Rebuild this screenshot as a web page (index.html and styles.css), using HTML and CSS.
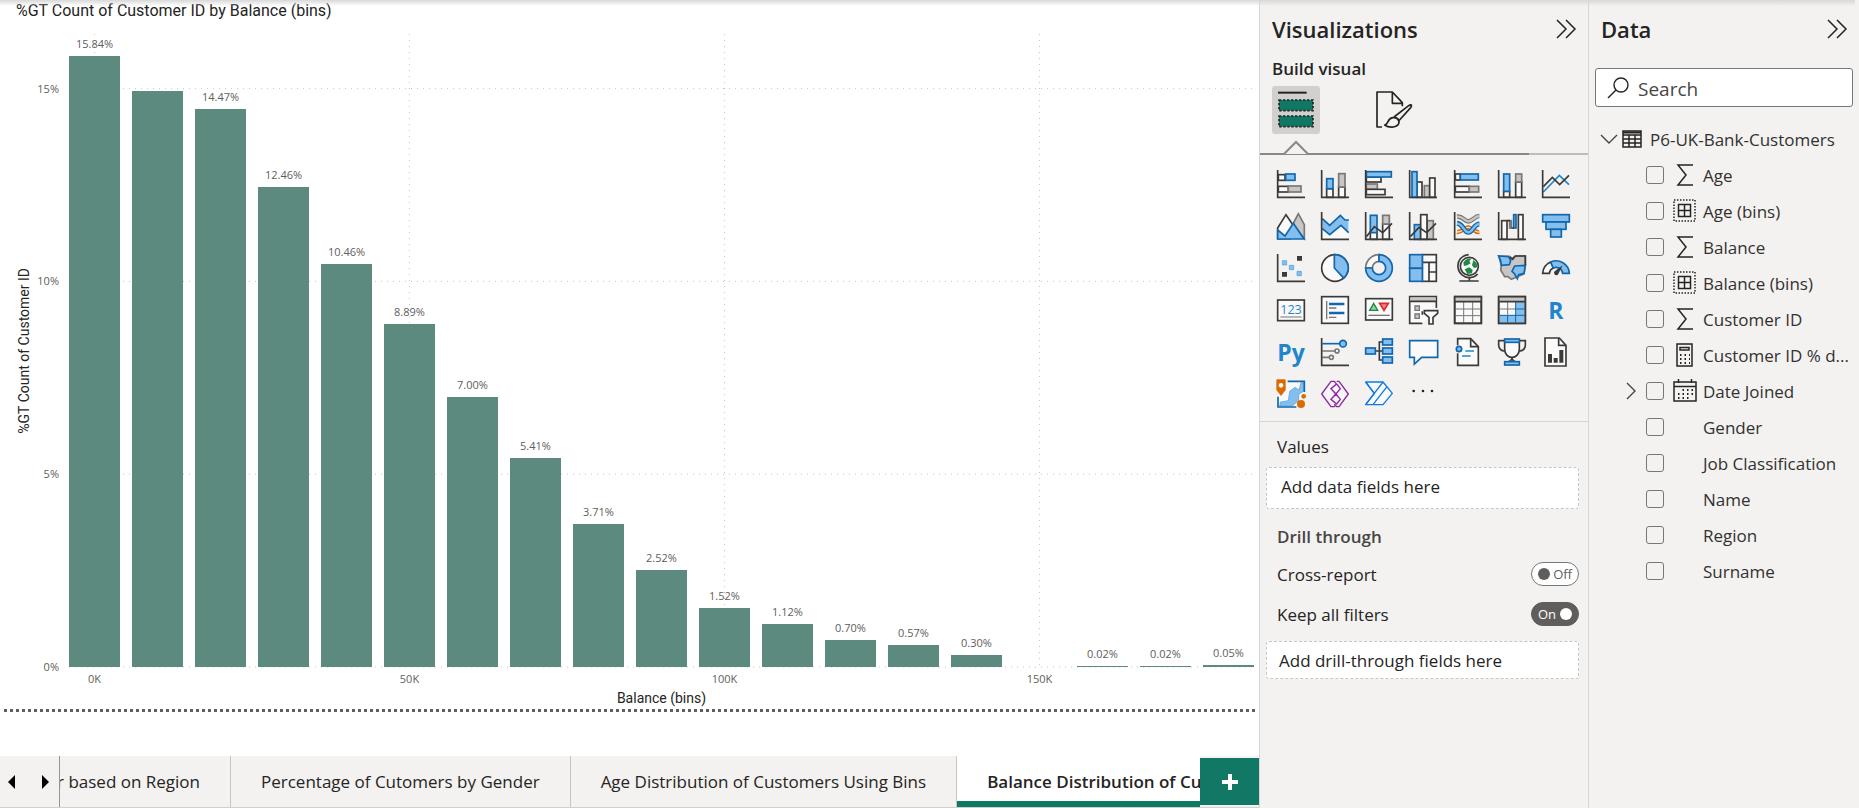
FILE: index.html
```html
<!DOCTYPE html>
<html lang="en">
<head>
<meta charset="utf-8">
<title>Balance Distribution of Customers</title>
<link rel="stylesheet" href="styles.css">
</head>
<body>
<div class="app">
  <main class="report">
    <h1 class="chart-title">%GT Count of Customer ID by Balance (bins)</h1>
    <section class="chart">
      <div class="y-title"><span>%GT Count of Customer ID</span></div>
      <div class="y-axis">
        <span style="--v:15">15%</span>
        <span style="--v:10">10%</span>
        <span style="--v:5">5%</span>
        <span style="--v:0">0%</span>
      </div>
      <div class="plot">
        <svg class="gridlines" aria-hidden="true">
          <line x1="0" x2="100%" y1="8.63%" y2="8.63%"/>
          <line x1="0" x2="100%" y1="39.08%" y2="39.08%"/>
          <line x1="0" x2="100%" y1="69.54%" y2="69.54%"/>
          <line x1="0" x2="100%" y1="100%" y2="100%"/>
          <line x1="2.15%" x2="2.15%" y1="0" y2="100%"/>
          <line x1="28.73%" x2="28.73%" y1="0" y2="100%"/>
          <line x1="55.32%" x2="55.32%" y1="0" y2="100%"/>
          <line x1="81.9%" x2="81.9%" y1="0" y2="100%"/>
        </svg>
        <ul class="bars">
          <li><span>15.84%</span><i style="--v:15.84"></i></li>
          <li><i style="--v:14.93"></i></li>
          <li><span>14.47%</span><i style="--v:14.47"></i></li>
          <li><span>12.46%</span><i style="--v:12.46"></i></li>
          <li><span>10.46%</span><i style="--v:10.46"></i></li>
          <li><span>8.89%</span><i style="--v:8.89"></i></li>
          <li><span>7.00%</span><i style="--v:7"></i></li>
          <li><span>5.41%</span><i style="--v:5.41"></i></li>
          <li><span>3.71%</span><i style="--v:3.71"></i></li>
          <li><span>2.52%</span><i style="--v:2.52"></i></li>
          <li><span>1.52%</span><i style="--v:1.52"></i></li>
          <li><span>1.12%</span><i style="--v:1.12"></i></li>
          <li><span>0.70%</span><i style="--v:0.7"></i></li>
          <li><span>0.57%</span><i style="--v:0.57"></i></li>
          <li><span>0.30%</span><i style="--v:0.3"></i></li>
          <li></li>
          <li><span>0.02%</span><i style="--v:0.02"></i></li>
          <li><span>0.02%</span><i style="--v:0.02"></i></li>
          <li><span>0.05%</span><i style="--v:0.05"></i></li>
        </ul>
      </div>
      <div class="x-axis">
        <span>0K</span><span>50K</span><span>100K</span><span>150K</span>
      </div>
      <div class="x-title">Balance (bins)</div>
    </section>
    <div class="page-edge"></div>
    <nav class="tabbar" aria-label="Report pages">
      <div class="pager">
        <button type="button" aria-label="Previous pages"><svg width="8" height="14" viewBox="0 0 8 14"><path d="M7 0V14L0 7Z"/></svg></button>
        <button type="button" aria-label="Next pages"><svg width="8" height="14" viewBox="0 0 8 14"><path d="M1 0V14L8 7Z"/></svg></button>
      </div>
      <div class="tabs">
        <button type="button" class="tab tab-cut"><span>r based on Region</span></button>
        <button type="button" class="tab">Percentage of Cutomers by Gender</button>
        <button type="button" class="tab">Age Distribution of Customers Using Bins</button>
        <button type="button" class="tab active" aria-current="page">Balance Distribution of Customers</button>
      </div>
      <button type="button" class="add-page" aria-label="New page"><svg width="18" height="18" viewBox="0 0 18 18"><path d="M9 1V17M1 9H17"/></svg></button>
    </nav>
  </main>

  <aside class="panel visualizations">
    <header class="panel-head">
      <h2>Visualizations</h2>
      <button type="button" aria-label="Collapse"><svg class="chev" width="20" height="20" viewBox="0 0 20 20"><path d="M1 1L10 10L1 19M10 1L19 10L10 19"/></svg></button>
    </header>
    <h3>Build visual</h3>
    <div class="modes">
      <button type="button" class="mode selected" aria-label="Build visual">
        <svg width="36" height="36" viewBox="0 0 108 108"><path d="M0 2H86" stroke="#252423" stroke-width="6"/><g fill="#117865" stroke="#252423" stroke-width="5" stroke-dasharray="7 5"><rect x="3" y="24" width="102" height="32"/><rect x="3" y="72" width="102" height="32"/></g></svg>
      </button>
      <button type="button" class="mode" aria-label="Format visual">
        <svg width="36" height="38" viewBox="0 0 108 114" fill="none" stroke="#252423" stroke-width="5" stroke-linejoin="round"><path d="M18 108H3V3H49L79 35V46M49 3V37H79"/><path d="M26 102C38 100 32 84 50 80C62 78 72 88 68 98C62 112 36 110 26 102Z"/><path d="M54 78L98 44C108 38 108 44 104 50L68 90M54 78C62 80 68 84 70 90"/></svg>
      </button>
    </div>
    <div class="pointer"><svg width="30" height="14" viewBox="0 0 30 14"><path d="M0 13H3L15 1L27 13H30"/></svg></div>

    <div class="gallery">
      <button type="button" aria-label="Stacked bar chart"><svg viewBox="0 0 84 84"><rect class="w" x="4" y="14" width="20" height="17"/><rect class="b" x="26" y="12" width="28" height="19"/><rect class="w" x="4" y="49" width="30" height="17"/><rect class="g" x="34" y="48" width="38" height="18"/><path class="k" d="M2 0V82H84"/></svg></button>
      <button type="button" aria-label="Stacked column chart"><svg viewBox="0 0 84 84"><rect class="w" x="17" y="56" width="19" height="26"/><rect class="b" x="17" y="26" width="19" height="30"/><rect class="w" x="53" y="51" width="19" height="31"/><rect class="g" x="53" y="11" width="19" height="40"/><path class="k" d="M2 0V82H84"/></svg></button>
      <button type="button" aria-label="Clustered bar chart"><svg viewBox="0 0 84 84"><rect class="w" x="4" y="21" width="44" height="15"/><rect class="b" x="4" y="5" width="75" height="16"/><rect class="g" x="4" y="42" width="33" height="16"/><rect class="w" x="4" y="58" width="56" height="16"/><path class="k" d="M2 0V82H84"/></svg></button>
      <button type="button" aria-label="Clustered column chart"><svg viewBox="0 0 84 84"><rect class="w" x="24" y="36" width="15" height="46"/><rect class="b" x="9" y="5" width="15" height="77"/><rect class="g" x="46" y="47" width="16" height="35"/><rect class="w" x="62" y="24" width="16" height="58"/><path class="k" d="M2 0V82H84"/></svg></button>
      <button type="button" aria-label="100% stacked bar chart"><svg viewBox="0 0 84 84"><rect class="w" x="4" y="12" width="15" height="18"/><rect class="b" x="19" y="12" width="54" height="18"/><rect class="w" x="4" y="49" width="42" height="17"/><rect class="g" x="46" y="49" width="28" height="17"/><path class="k" d="M2 0V82H84"/></svg></button>
      <button type="button" aria-label="100% stacked column chart"><svg viewBox="0 0 84 84"><rect class="w" x="17" y="64" width="18" height="18"/><rect class="b" x="17" y="12" width="18" height="52"/><rect class="w" x="53" y="36" width="18" height="46"/><rect class="g" x="53" y="12" width="18" height="24"/><path class="k" d="M2 0V82H84"/></svg></button>
      <button type="button" aria-label="Line chart"><svg viewBox="0 0 84 84"><path class="k line-blue" d="M4 66L52 16L81 44"/><path class="k" d="M4 50L31 22L53 44L81 16"/><path class="k" d="M2 0V82H84"/></svg></button>

      <button type="button" aria-label="Area chart"><svg viewBox="0 0 84 84"><path class="w" d="M2 48L27 8L54 48L40 80H2Z"/><path class="g" d="M48 36L64 5L82 38V80Z"/><path class="b" d="M2 54L24 72L49 34L81 81H2Z"/></svg></button>
      <button type="button" aria-label="Stacked area chart"><svg viewBox="0 0 84 84"><path fill="#fafafa" d="M4 48L82 40V80H4Z"/><path class="b nostroke" d="M4 20L26 40L58 10L72 24H82V62L60 42L26 68L4 50Z"/><path class="bl" d="M4 20L26 40L58 10L72 24H84M4 50L26 68L60 40L83 62"/><path class="k" d="M2 0V82H84"/></svg></button>
      <button type="button" aria-label="Line and stacked column chart"><svg viewBox="0 0 84 84"><rect class="w" x="16" y="60" width="20" height="22"/><rect class="b" x="16" y="10" width="20" height="52"/><rect class="w" x="53" y="36" width="20" height="46"/><rect class="g" x="53" y="10" width="20" height="26"/><path class="k" d="M4 74L28 44L53 62L81 34"/><path class="k" d="M2 0V82H84"/></svg></button>
      <button type="button" aria-label="Line and clustered column chart"><svg viewBox="0 0 84 84"><rect class="b" x="16" y="38" width="19" height="44"/><rect class="g" x="54" y="26" width="19" height="56"/><rect class="w" x="35" y="8" width="19" height="74"/><path class="k" d="M4 74L30 46L53 62L81 34"/><path class="k" d="M2 0V82H84"/></svg></button>
      <button type="button" aria-label="Ribbon chart"><svg viewBox="0 0 84 84" fill="none"><path stroke="#797775" stroke-width="14" d="M9 14C28 12 30 28 43 28S62 12 76 12"/><path stroke="#c8c6c4" stroke-width="7" d="M9 14C28 12 30 28 43 28S62 12 76 12"/><path stroke="#d96b00" stroke-width="13" d="M9 60C26 62 30 44 43 46S62 62 76 60"/><path stroke="#fbe3cc" stroke-width="4" d="M9 60C26 62 30 44 43 46S62 62 76 60"/><path stroke="#1067ae" stroke-width="15" d="M9 34C28 36 30 61 43 61S60 36 76 36"/><path stroke="#83beec" stroke-width="7" d="M9 34C28 36 30 61 43 61S60 36 76 36"/><path class="k" d="M2 0V82H84"/></svg></button>
      <button type="button" aria-label="Waterfall chart"><svg viewBox="0 0 84 84"><rect class="w" x="11" y="26" width="16" height="56"/><rect class="g" x="35" y="26" width="5" height="22"/><rect class="b" x="47" y="8" width="7" height="40"/><rect class="w" x="61" y="8" width="14" height="74"/><path class="k" d="M27 26H36M40 48H48"/><path class="k" d="M2 0V82H84"/></svg></button>
      <button type="button" aria-label="Funnel"><svg viewBox="0 0 84 84"><rect class="b" x="2" y="8" width="80" height="22"/><rect class="b" x="12" y="30" width="60" height="22"/><rect class="b" x="26" y="52" width="32" height="23"/></svg></button>

      <button type="button" aria-label="Scatter chart"><svg viewBox="0 0 84 84"><path class="k" d="M2 0V82H84"/><path fill="#3b3a39" d="M60 6h15v14h-15zM15 54h15v14h-15z"/><path fill="#83beec" stroke="#4a9fdc" stroke-width="2" d="M16 20h13v13h-13zM37 34h13v13h-13zM60 52h13v13h-13z"/></svg></button>
      <button type="button" aria-label="Pie chart"><svg viewBox="0 0 84 84"><circle class="w" cx="42" cy="42" r="40"/><path class="b" d="M40 42V2A40 40 0 0 1 68 72Z"/></svg></button>
      <button type="button" aria-label="Donut chart"><svg viewBox="0 0 84 84"><path class="w line-gray" d="M2 42A40 40 0 0 1 42 2V22A20 20 0 0 0 22 42Z"/><path class="b" d="M42 2A40 40 0 1 1 2 42H22A20 20 0 1 0 42 22Z"/></svg></button>
      <button type="button" aria-label="Treemap"><svg viewBox="0 0 84 84"><rect class="w" x="40" y="2" width="42" height="80"/><path class="k" d="M40 25H82M60 25V82M60 54H82"/><rect class="b" x="2" y="2" width="38" height="41"/><rect class="b" x="2" y="43" width="38" height="39"/></svg></button>
      <button type="button" aria-label="Map"><svg viewBox="0 0 84 84"><circle class="w" cx="46" cy="37" r="27"/><path fill="#1f8a45" d="M28 26C34 14 46 12 52 14L46 22L50 28L40 34L30 36ZM58 18L68 28L70 40L60 42L54 34ZM32 46L46 40L56 48L54 58L40 60Z"/><path class="k" d="M44 2C22 4 10 20 12 40C14 58 30 72 48 71C58 70 66 66 71 60M46 72V80M16 81H74"/></svg></button>
      <button type="button" aria-label="Filled map"><svg viewBox="0 0 84 84"><path class="g" d="M2 6L36 8L42 14L52 6H82V34L78 60L58 68L40 76L30 68H20L8 48L10 34Z"/><path class="b" d="M2 6L32 8L38 20L34 32L10 34L8 20Z"/><path class="b" d="M50 36L82 34L78 58L62 62L58 74L50 60L42 52Z"/><path class="k" d="M36 10L44 16L52 6H82V34"/></svg></button>
      <button type="button" aria-label="Gauge"><svg viewBox="0 0 84 84"><path class="w" d="M2 58A40 40 0 0 1 26 24L34 42A20 20 0 0 0 22 58Z"/><path class="b" d="M26 24A40 40 0 0 1 82 58H62A20 20 0 0 0 34 42Z"/><path fill="#3b3a39" d="M62 34L50 58A7 7 0 1 1 38 52Z"/></svg></button>

      <button type="button" aria-label="Card"><svg viewBox="0 0 84 84"><rect class="w" x="2" y="12" width="80" height="62"/><text x="42" y="54" text-anchor="middle" font-size="38" fill="#1f86cb">123</text><path stroke="#797775" stroke-width="3" d="M10 63H74"/></svg></button>
      <button type="button" aria-label="Multi-row card"><svg viewBox="0 0 84 84"><rect class="w" x="2" y="2" width="80" height="80"/><path stroke="#797775" stroke-width="4" d="M17 15V70M24 36H46M24 64H46"/><path stroke="#1067ae" stroke-width="7" d="M24 24H70M24 51H70"/></svg></button>
      <button type="button" aria-label="KPI"><svg viewBox="0 0 84 84"><rect class="w" x="2" y="8" width="80" height="64"/><path fill="#8fd0a0" stroke="#1f8a45" stroke-width="4" d="M14 43L26 22L38 43Z"/><path fill="#f08080" stroke="#d92c2c" stroke-width="5" d="M44 22H70L57 43Z"/><path stroke="#797775" stroke-width="4" d="M10 58H74"/></svg></button>
      <button type="button" aria-label="Slicer"><svg viewBox="0 0 84 84"><path class="w" d="M40 82H2V2H82V36"/><path fill="#c8c6c4" d="M4 4H80V15H4Z"/><path class="k" d="M2 16H82M40 46V56"/><path fill="#c8c6c4" stroke="#797775" stroke-width="4" d="M18 30h13v13h-13zM18 54h13v13h-13z"/><path class="w" d="M46 44H86V52L72 64V84H60V64L46 52Z"/></svg></button>
      <button type="button" aria-label="Table"><svg viewBox="0 0 84 84"><rect class="w" x="2" y="2" width="80" height="80"/><path fill="#c8c6c4" d="M4 4H80V16H4Z"/><path stroke="#797775" stroke-width="3" d="M29 18V80M56 18V80M4 39H80M4 59H80"/><path class="k" d="M2 17H82M2 2H82V82H2Z"/></svg></button>
      <button type="button" aria-label="Matrix"><svg viewBox="0 0 84 84"><rect class="w" x="2" y="2" width="80" height="80"/><path fill="#c8c6c4" d="M4 4H80V16H4Z"/><path fill="#83beec" d="M53 18H80V80H4V57H53Z"/><path stroke="#797775" stroke-width="3" d="M29 18V56M4 39H53"/><path stroke="#1067ae" stroke-width="3" d="M29 58V80M53 18V80M53 39H80M4 58H80"/><path class="k" d="M2 17H82M2 2H82V82H2Z"/></svg></button>
      <button type="button" aria-label="R script visual" class="glyph">R</button>

      <button type="button" aria-label="Python visual" class="glyph">Py</button>
      <button type="button" aria-label="Key influencers"><svg viewBox="0 0 84 84"><path class="k line-gray" d="M4 39H42M4 58H24"/><circle class="w line-gray" cx="48" cy="39" r="6"/><circle class="w line-gray" cx="31" cy="58" r="6"/><path class="bl" d="M4 17H56"/><circle class="b" cx="66" cy="17" r="10"/><path class="k" d="M2 0V82H84"/></svg></button>
      <button type="button" aria-label="Decomposition tree"><svg viewBox="0 0 84 84"><path class="k" d="M30 39H52M54 12H43V66H54"/><rect class="b" x="2" y="30" width="29" height="18"/><rect class="b" x="53" y="3" width="29" height="18"/><rect class="b" x="53" y="30" width="29" height="18"/><rect class="b" x="53" y="57" width="29" height="18"/></svg></button>
      <button type="button" aria-label="Q&amp;A"><svg viewBox="0 0 84 84"><path class="w line-deep" d="M2 8H86V58H38L16 78V58H2Z"/></svg></button>
      <button type="button" aria-label="Smart narrative"><svg viewBox="0 0 84 84"><path class="w" d="M11 22V2H50L73 26V82H11V46"/><path class="k" d="M50 2V26H73"/><circle class="b" cx="15" cy="33" r="8"/><path class="bl line-blue" d="M34 39H60M24 54H50"/></svg></button>
      <button type="button" aria-label="Goals"><svg viewBox="0 0 84 84"><path class="k" d="M20 8H2V22C2 34 12 40 22 38M64 8H82V22C82 34 72 40 62 38"/><path class="w" d="M20 10V34C20 48 30 58 42 58S64 48 64 34V10M42 58C42 66 38 70 30 72H54C46 70 42 66 42 58"/><rect class="b" x="20" y="3" width="44" height="10"/><rect class="b" x="20" y="71" width="44" height="10"/></svg></button>
      <button type="button" aria-label="Paginated report"><svg viewBox="0 0 84 84"><path class="w" d="M9 0H52L72 22V84H9Z"/><path class="k" d="M50 0V22H72"/><path fill="#3b3a39" d="M18 48h12v26h-12zM35 60h12v14h-12zM52 36h12v38h-12z"/></svg></button>

      <button type="button" aria-label="ArcGIS Maps"><svg viewBox="0 0 84 84"><path fill="#fafafa" d="M30 4H80V40L60 66L54 78H4V40Z"/><path fill="#83beec" stroke="#4a9fdc" stroke-width="2" d="M80 8V34L66 42L64 62L46 78H8L10 66L34 62L38 34L54 22L66 30L72 8Z"/><path class="bl" d="M32 4H82V36M3 50V81H58"/><path fill="#d96b00" d="M-2 2Q-2 -2 2 -2H22Q26 -2 26 2V30L12 48L-2 30Z"/><circle cx="12" cy="16" r="7" fill="#fafafa"/><circle cx="72" cy="72" r="12" fill="#d96b00"/><circle cx="80" cy="49" r="7" fill="#d96b00"/></svg></button>
      <button type="button" aria-label="Power Apps"><svg viewBox="0 0 84 84" fill="#f8f4f9" stroke="#8a2b9c" stroke-width="4" stroke-linejoin="round"><path d="M30 4H40L47 12L30 26L45 42L30 58L47 72L40 80H30L2 42Z"/><path d="M47 4H54L82 42L54 80H47L40 72M47 12L58 26L45 42L58 58L47 72L30 58L45 42L30 26Z"/></svg></button>
      <button type="button" aria-label="Power Automate"><svg viewBox="0 0 84 84" fill="#fafafa" stroke="#0f7be0" stroke-width="4" stroke-linejoin="round"><path d="M2 6H54L82 40L54 74H2L28 40Z"/><path d="M54 6L2 74M66 20L24 74M28 40L2 6" fill="none"/></svg></button>
      <button type="button" aria-label="More visuals"><svg viewBox="0 0 84 84" fill="#252423"><circle cx="14" cy="33" r="4"/><circle cx="42" cy="33" r="4"/><circle cx="69" cy="33" r="4"/></svg></button>
    </div>

    <section class="wells">
      <h4>Values</h4>
      <div class="well well-values">Add data fields here</div>
      <h4 class="drill">Drill through</h4>
      <div class="switch-row"><span id="cross">Cross-report</span><button type="button" class="switch" role="switch" aria-checked="false" aria-labelledby="cross"><i></i>Off</button></div>
      <div class="switch-row"><span id="keep">Keep all filters</span><button type="button" class="switch on" role="switch" aria-checked="true" aria-labelledby="keep">On<i></i></button></div>
      <div class="well well-drill">Add drill-through fields here</div>
    </section>
  </aside>

  <aside class="panel data">
    <header class="panel-head">
      <h2>Data</h2>
      <button type="button" aria-label="Collapse"><svg class="chev" width="20" height="20" viewBox="0 0 20 20"><path d="M1 1L10 10L1 19M10 1L19 10L10 19"/></svg></button>
    </header>
    <label class="search">
      <svg width="22" height="22" viewBox="0 0 22 22" fill="none" stroke="#252423" stroke-width="1.4"><circle cx="14" cy="8" r="7"/><path d="M9 13L1 21"/></svg>
      <input type="search" placeholder="Search" aria-label="Search">
    </label>
    <div class="table-row">
      <svg class="caret" width="18" height="10" viewBox="0 0 18 10"><path d="M1 1L9 9L17 1"/></svg>
      <svg width="20" height="18" viewBox="0 0 20 18" fill="none" stroke="#252423" stroke-width="1.5"><path d="M1 1H19V17H1ZM1 5H19M1 9H19M1 13H19M7 5V17M13 5V17"/><path d="M1 2.5H19" stroke-width="2"/></svg>
      <span>P6-UK-Bank-Customers</span>
    </div>
    <ul class="fields">
      <li><span></span><input type="checkbox" id="f1"><svg viewBox="0 0 24 24"><path d="M20 2H5L13 12L5 22H20"/></svg><label for="f1">Age</label></li>
      <li><span></span><input type="checkbox" id="f2"><svg viewBox="0 0 24 24"><rect x="1" y="1" width="21" height="21" stroke-dasharray="1.5 1.5"/><path d="M5.500 5.500H17.500V17.500H5.500ZM11.500 5.500V17.500M5.500 11.500H17.500"/></svg><label for="f2">Age (bins)</label></li>
      <li><span></span><input type="checkbox" id="f3"><svg viewBox="0 0 24 24"><path d="M20 2H5L13 12L5 22H20"/></svg><label for="f3">Balance</label></li>
      <li><span></span><input type="checkbox" id="f4"><svg viewBox="0 0 24 24"><rect x="1" y="1" width="21" height="21" stroke-dasharray="1.5 1.5"/><path d="M5.500 5.500H17.500V17.500H5.500ZM11.500 5.500V17.500M5.500 11.500H17.500"/></svg><label for="f4">Balance (bins)</label></li>
      <li><span></span><input type="checkbox" id="f5"><svg viewBox="0 0 24 24"><path d="M20 2H5L13 12L5 22H20"/></svg><label for="f5">Customer ID</label></li>
      <li><span></span><input type="checkbox" id="f6"><svg viewBox="0 0 24 24"><path d="M4 1H19V23H4ZM7 4.500H16V7H7Z"/><path stroke-dasharray="1.500 3" stroke-width="1.800" d="M7 12H17M7 16H17M7 20H17"/></svg><label for="f6">Customer ID % d...</label></li>
      <li><span><svg class="caret" viewBox="0 0 10 18"><path d="M1 1L9 9L1 17"/></svg></span><input type="checkbox" id="f7"><svg viewBox="0 0 24 24"><path d="M1 3H23V22H1ZM1 7.500H23M5.500 0V4M18.500 0V4"/><path stroke-dasharray="1.500 3" stroke-width="1.800" d="M9.500 11H20M5 15H20M5 19H16"/></svg><label for="f7">Date Joined</label></li>
      <li><span></span><input type="checkbox" id="f8"><span></span><label for="f8">Gender</label></li>
      <li><span></span><input type="checkbox" id="f9"><span></span><label for="f9">Job Classification</label></li>
      <li><span></span><input type="checkbox" id="f10"><span></span><label for="f10">Name</label></li>
      <li><span></span><input type="checkbox" id="f11"><span></span><label for="f11">Region</label></li>
      <li><span></span><input type="checkbox" id="f12"><span></span><label for="f12">Surname</label></li>
    </ul>
  </aside>
</div>
</body>
</html>
```
FILE: styles.css
```css
* { box-sizing: border-box; }
body {
  margin: 0;
  font-family: "Open Sans", "Noto Sans", sans-serif;
  font-size: 17px;
  color: #252423;
  background: #fff;
}
h1, h2, h3, h4, ul { margin: 0; padding: 0; font-weight: 400; }
ul { list-style: none; }
button {
  margin: 0; padding: 0; border: 0;
  background: none; font: inherit; color: inherit;
}
svg { display: block; overflow: visible; }

.app {
  position: relative;
  display: grid;
  grid-template-columns: minmax(0, 1fr) 329px 271px;
  min-height: 100vh;
}
.app::before {
  content: "";
  position: absolute;
  inset: 0 4px auto 0;
  height: 6px;
  background: linear-gradient(#d8d8d8, rgba(216, 216, 216, 0));
}

/* Report canvas */
.report { display: flex; flex-direction: column; min-width: 0; }
.chart-title {
  padding-left: 16px;
  font: 16px/22px Roboto, sans-serif;
}
.chart {
  flex: 1;
  display: grid;
  grid-template-columns: 20px 25px minmax(0, 1fr);
  grid-template-rows: minmax(0, 1fr) 22px 18px;
  padding: 12px 5px 2px 14px;
}
.y-title {
  display: flex; align-items: center; justify-content: center;
  font: 14px/20px Roboto, sans-serif;
}
.y-title span { writing-mode: vertical-rl; transform: rotate(180deg); white-space: nowrap; }
.y-axis { position: relative; font-size: 11px; line-height: 16px; color: #605e5c; }
.y-axis span {
  position: absolute; right: 0;
  bottom: calc(var(--v) / 16.416 * 100% - 8px);
}
.plot { position: relative; margin-left: 10px; }
.gridlines { position: absolute; inset: 0; width: 100%; height: 100%; }
.gridlines line { stroke: #c8c6c4; stroke-width: 1; stroke-dasharray: 1 5; }
.bars {
  position: relative; height: 100%;
  display: grid; grid-template-columns: repeat(19, minmax(0, 1fr)); column-gap: 12px;
}
.bars li { display: flex; flex-direction: column; justify-content: flex-end; height: 100%; }
.bars span {
  padding-bottom: 4px;
  font-size: 11px; line-height: 16px; text-align: center; color: #605e5c;
}
.bars i {
  flex: none; min-height: 1px;
  height: calc(var(--v) / 16.416 * 100%);
  background: #5c8a7f;
}
.x-axis {
  grid-column: 3; margin-left: 10px;
  display: grid; grid-template-columns: repeat(19, minmax(0, 1fr)); column-gap: 12px;
  font-size: 11px; line-height: 24px; text-align: center; color: #605e5c;
}
.x-axis span:nth-child(2) { grid-column: 6; }
.x-axis span:nth-child(3) { grid-column: 11; }
.x-axis span:nth-child(4) { grid-column: 16; }
.x-title {
  grid-column: 3; margin-left: 10px; text-align: center;
  font: 14px/18px Roboto, sans-serif;
}
.page-edge {
  height: 3px; margin: 0 4px 44px;
  background: repeating-linear-gradient(90deg, #605e5c 0 3px, transparent 3px 6px);
}

/* Page tabs */
.tabbar {
  display: flex; height: 52px;
  background: #f3f2f1; border-bottom: 1px solid #d2d0ce;
}
.pager { display: flex; align-items: center; gap: 25px; width: 60px; padding-left: 8px; border-right: 1px solid #979593; }
.tabs { flex: 1; display: flex; min-width: 0; overflow: hidden; }
.tab {
  flex: none; padding: 0 30px;
  border-right: 1px solid #c8c6c4;
  font-size: 17px; white-space: nowrap;
}
.tab-cut { display: flex; align-items: center; justify-content: flex-end; width: 171px; overflow: hidden; }
.tab.active { background: #fff; font-weight: 600; border-right: 0; border-bottom: 6px solid #117865; padding-top: 6px; }
.add-page {
  flex: none; display: grid; place-items: center;
  width: 59px; margin: 2px 0; background: #117865;
}
.add-page path { stroke: #fff; stroke-width: 4; }

/* Side panels */
.panel { background: #f3f2f1; border-left: 1px solid #d8d6d4; min-width: 0; }
.panel-head {
  display: flex; align-items: center; justify-content: space-between;
  height: 58px; padding: 0 12px;
}
.panel-head h2 { font-size: 22px; font-weight: 600; }
.chev path { fill: none; stroke: #252423; stroke-width: 1.5; }
.visualizations h3 { padding-left: 12px; font-size: 17px; line-height: 22px; font-weight: 600; }
.modes { display: flex; gap: 50px; padding: 6px 12px 0; }
.mode { display: grid; place-items: center; width: 48px; height: 48px; border-radius: 3px; }
.mode.selected { background: #d2d0ce; }
.pointer {
  height: 14px; margin: 7px 0 15px; padding-left: 21px;
  background: linear-gradient(90deg, #8a8886 0 82%, #bebbb8 82%) 0 100% / 100% 2px no-repeat;
}
.pointer path { fill: #f3f2f1; stroke: #8a8886; stroke-width: 2; }
.gallery {
  display: grid; grid-template-columns: repeat(7, 28px); grid-auto-rows: 28px;
  justify-content: space-between; row-gap: 14px;
  padding: 0 18px 13px 17px;
  border-bottom: 1px solid #d8d6d4;
}
.gallery svg { width: 28px; height: 28px; }
.gallery .glyph { font-weight: 700; font-size: 23px; line-height: 24px; color: #1f86cb; }
.k { fill: none; stroke: #3b3a39; stroke-width: 5; }
.w { fill: #fafafa; stroke: #3b3a39; stroke-width: 5; }
.b { fill: #83beec; stroke: #1067ae; stroke-width: 5; }
.g { fill: #c8c6c4; stroke: #797775; stroke-width: 5; }
.bl { fill: none; stroke: #1067ae; stroke-width: 5; }
.nostroke { stroke: none; }
.line-gray { stroke: #797775; }
.line-blue { stroke: #1f86cb; }
.line-deep { stroke: #1067ae; }

.wells { padding: 13px 9px 0 6px; }
.wells h4 { padding-left: 11px; line-height: 24px; }
.well {
  display: flex; align-items: center;
  background: #fff; border: 1px dashed #c8c6c4; border-radius: 3px;
}
.well-values { height: 42px; margin: 8px 0 16px; padding: 0 14px 4px; }
.well-drill { height: 38px; margin-top: 7px; padding: 0 12px; }
.wells .drill { margin-bottom: 5px; font-weight: 600; color: #484644; }
.switch-row {
  display: flex; align-items: center; justify-content: space-between;
  height: 40px; padding-left: 11px;
}
.switch {
  display: flex; align-items: center; justify-content: space-between;
  width: 48px; height: 24px; padding: 0 6px;
  border: 1px solid #797775; border-radius: 12px;
  background: #fff; color: #605e5c; font-size: 13px;
}
.switch i { width: 12px; height: 12px; border-radius: 50%; background: #605e5c; }
.switch.on { background: #605e5c; border-color: #605e5c; color: #fff; }
.switch.on i { background: #fff; }

.search {
  display: flex; align-items: center; gap: 9px;
  height: 39px; margin: 10px 6px 14px; padding: 0 11px;
  background: #fff; border: 1px solid #797775; border-radius: 3px;
}
.search input {
  flex: 1; min-width: 0; padding: 2px 0 0; border: 0; outline: 0;
  background: none; font: inherit; font-size: 19px;
}
.search input::placeholder { color: #484644; opacity: 1; }
.table-row { display: flex; align-items: center; height: 36px; padding-left: 11px; color: #323130; }
.table-row span { padding-left: 8px; }
.table-row .caret { margin-right: 4px; }
.caret path { fill: none; stroke: #484644; stroke-width: 1.4; }
.fields li {
  display: grid; grid-template-columns: 20px 18px 24px minmax(0, 1fr);
  align-items: center; height: 36px; padding-left: 37px; color: #323130;
}
.fields span .caret { width: 10px; height: 18px; }
.fields input {
  appearance: none; width: 18px; height: 18px; margin: 0;
  border: 1px solid #797775; border-radius: 3px;
}
.fields li > svg, .fields li > input + span { width: 24px; height: 24px; margin-left: 9px; }
.fields li > svg { fill: none; stroke: #252423; stroke-width: 1.5; }
.fields label { padding-left: 15px; white-space: nowrap; }
```
